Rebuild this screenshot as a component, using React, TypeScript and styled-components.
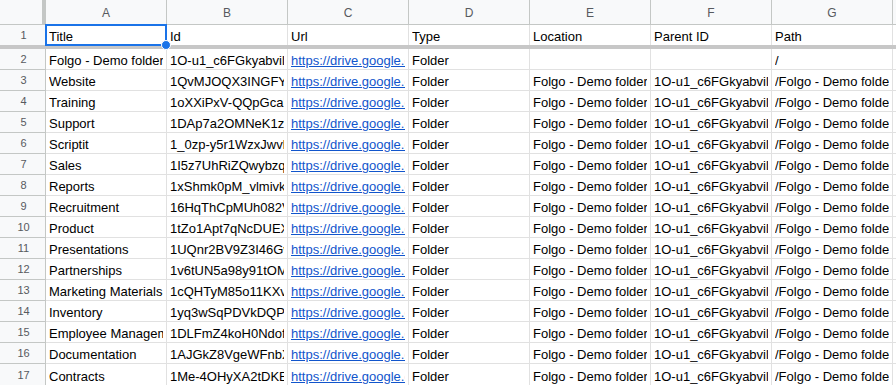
import React from "react";
import styled, { createGlobalStyle } from "styled-components";

const GlobalStyle = createGlobalStyle`
  html, body {
    margin: 0;
    padding: 0;
    background: #ffffff;
    overflow: hidden;
  }
  * { box-sizing: border-box; }
`;

const Sheet = styled.div`
  display: grid;
  grid-template-columns: 46px repeat(7, 121px) 1fr;
  grid-template-rows: 25px 20px 4px repeat(16, 21px);
  width: 896px;
  height: 385px;
  overflow: hidden;
  font-family: "Liberation Sans", Arial, sans-serif;
  font-size: 13px;
  color: #000;
`;

const Corner = styled.div`
  background: #f8f9fa;
  border-bottom: 1px solid #c4c7c5;
  border-right: 1px solid #c4c7c5;
  display: flex;
  justify-content: flex-end;
`;

const CornerBar = styled.div`
  width: 4px;
  height: 100%;
  background: #c4c7c5;
  margin-right: -1px;
`;

const ColHeader = styled.div`
  background: #f8f9fa;
  border-bottom: 1px solid #c4c7c5;
  border-right: 1px solid #c4c7c5;
  display: flex;
  align-items: center;
  justify-content: center;
  font-family: "Liberation Sans", Arial, sans-serif;
  font-size: 12px;
  color: #575a5e;
  padding-top: 1px;
`;

const RowHeader = styled.div<{ $last?: boolean }>`
  background: #f8f9fa;
  border-right: 1px solid #c4c7c5;
  border-bottom: ${(p) => (p.$last ? "none" : "1px solid #c4c7c5")};
  display: flex;
  align-items: center;
  justify-content: center;
  font-size: 11px;
  color: #575a5e;
  padding-left: 2px;
`;

const Cell = styled.div<{ $last?: boolean }>`
  position: relative;
  border-right: 1px solid #e1e1e1;
  border-bottom: ${(p) => (p.$last ? "none" : "1px solid #e1e1e1")};
  padding: 0 3px 1px 3px;
  display: flex;
  align-items: flex-end;
  white-space: nowrap;
  line-height: 15px;
`;

const Clip = styled.div`
  overflow: hidden;
  width: 100%;
  white-space: nowrap;
`;

const Link = styled.span`
  color: #1155cc;
  text-decoration: underline;
`;

const FreezeBar = styled.div`
  grid-column: 1 / -1;
  background: #c7c7c7;
`;

const Selection = styled.div`
  position: absolute;
  top: -1px;
  left: -1px;
  right: -1px;
  bottom: -1px;
  border: 2px solid #1a73e8;
  z-index: 3;
  pointer-events: none;
`;

const FillHandle = styled.div`
  position: absolute;
  width: 10px;
  height: 10px;
  right: -6px;
  bottom: -6px;
  border-radius: 50%;
  background: #1a73e8;
  border: 1px solid #ffffff;
`;

const letters = ["A", "B", "C", "D", "E", "F", "G", ""];
const headers = ["Title", "Id", "Url", "Type", "Location", "Parent ID", "Path", ""];

const parentId = "1O-u1_c6FGkyabvilQx7Tn3KpZ";
const url = "https://drive.google.com/drive/folders/";

const items: [string, string][] = [
  ["Website", "1QvMJOQX3INGFYa8kLm2"],
  ["Training", "1oXXiPxV-QQpGcaR7tY"],
  ["Support", "1DAp7a2OMNeK1zHq8Wd"],
  ["Scriptit", "1_0zp-y5r1WzxJwvlB3c"],
  ["Sales", "1I5z7UhRiZQwybzqT6Yf"],
  ["Reports", "1xShmk0pM_vlmivkE2Gh"],
  ["Recruitment", "16HqThCpMUh082Vn4Js"],
  ["Product", "1tZo1Apt7qNcDUEXk9P"],
  ["Presentations", "1UQnr2BV9Z3I46GwR5t"],
  ["Partnerships", "1v6tUN5a98y91tOMz2Lx"],
  ["Marketing Materials", "1cQHTyM85o11KXvb7Nq"],
  ["Inventory", "1yq3wSqPDVkDQPe4Hs"],
  ["Employee Management", "1DLFmZ4koH0Ndofa9Vc"],
  ["Documentation", "1AJGkZ8VgeWFnbXr3Km"],
  ["Contracts", "1Me-4OHyXA2tDKEu6Bp"],
];

type RowData = string[];

const rows: RowData[] = [
  ["Folgo - Demo folder", parentId, url + parentId, "Folder", "", "", "/", ""],
  ...items.map(([title, id]) => [
    title,
    id,
    url + id,
    "Folder",
    "Folgo - Demo folder",
    parentId,
    "/Folgo - Demo folder/" + title,
    "",
  ]),
];

export default function App() {
  return (
    <>
      <GlobalStyle />
      <Sheet>
        <Corner>
          <CornerBar />
        </Corner>
        {letters.map((l, i) => (
          <ColHeader key={"h" + i}>{l}</ColHeader>
        ))}

        <RowHeader $last>1</RowHeader>
        {headers.map((h, i) => (
          <Cell key={"r1" + i} $last>
            <Clip>{h}</Clip>
            {i === 0 && (
              <Selection>
                <FillHandle />
              </Selection>
            )}
          </Cell>
        ))}

        <FreezeBar />

        {rows.map((r, ri) => (
          <React.Fragment key={"row" + ri}>
            <RowHeader $last={ri === rows.length - 1}>{ri + 2}</RowHeader>
            {r.map((v, ci) => (
              <Cell key={ci} $last={ri === rows.length - 1}>
                <Clip>{ci === 2 ? <Link>{v}</Link> : v}</Clip>
              </Cell>
            ))}
          </React.Fragment>
        ))}
      </Sheet>
    </>
  );
}
